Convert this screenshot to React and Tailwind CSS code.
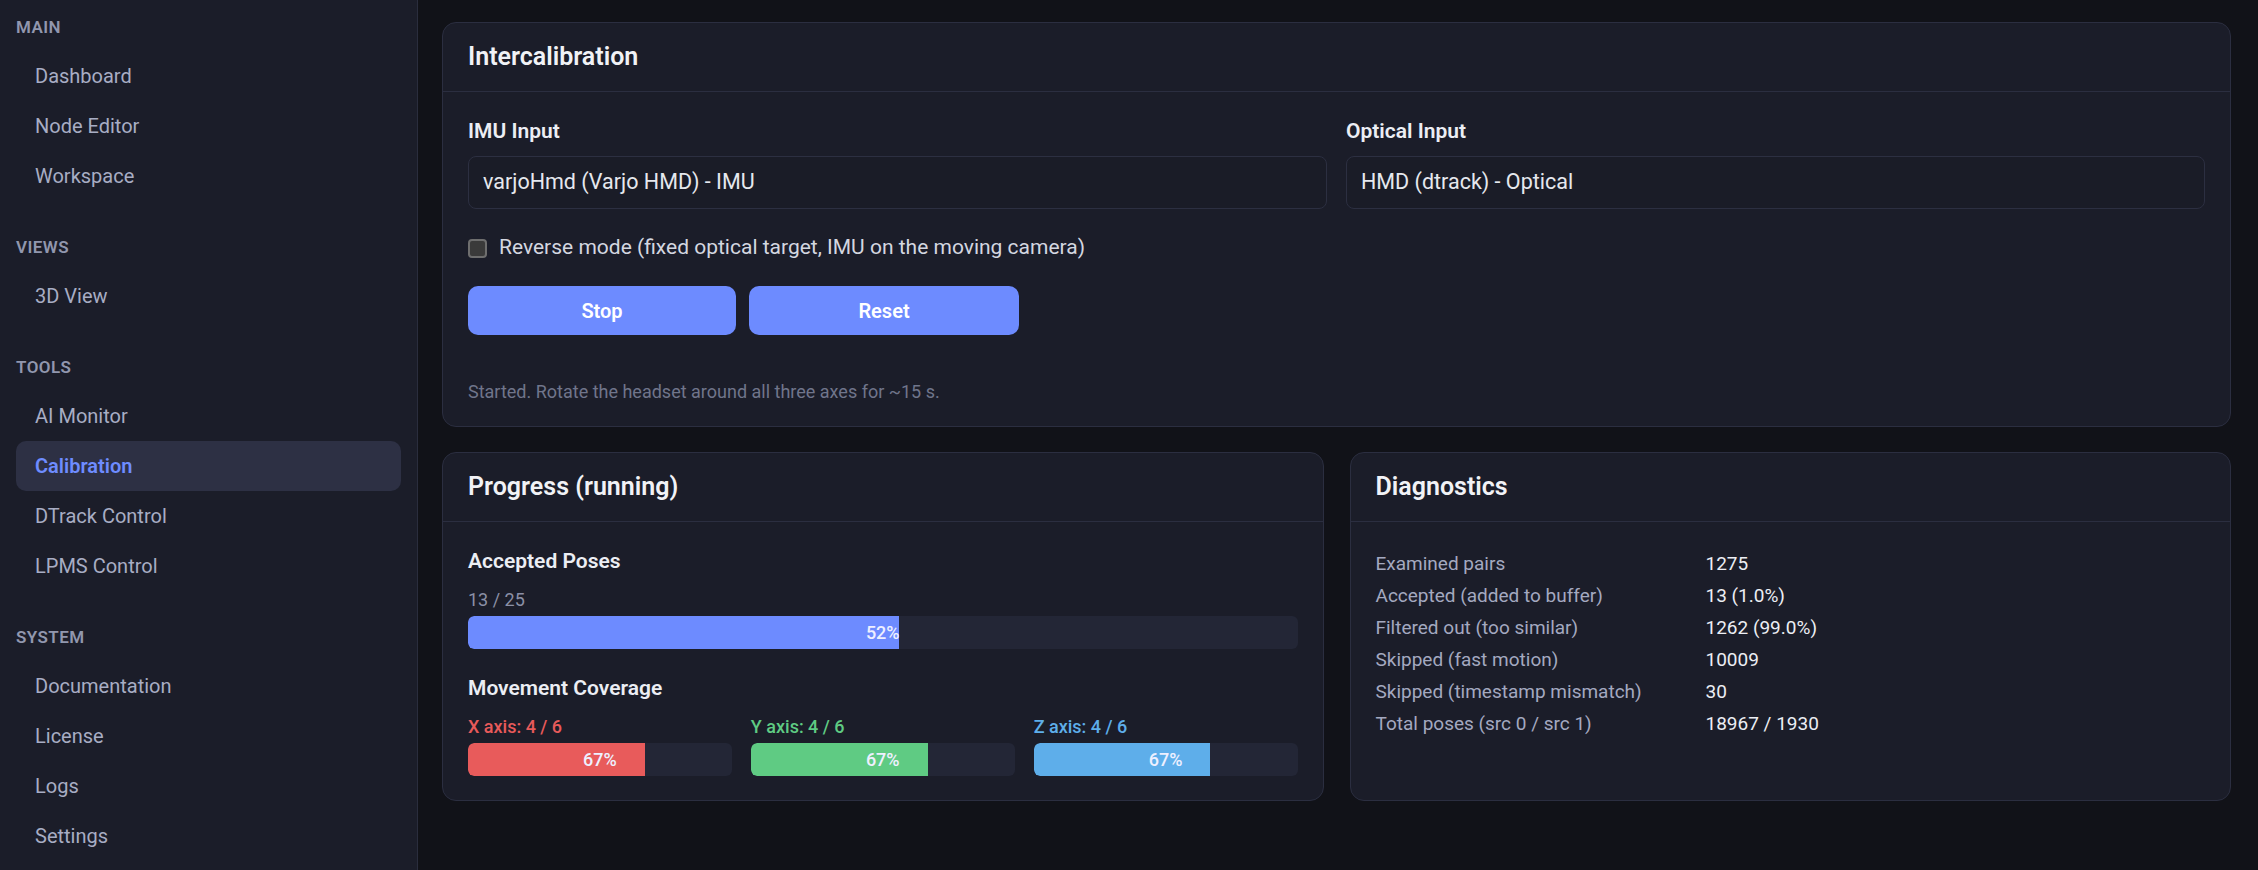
import { useState } from "react";

const sections = [
  { title: "MAIN", items: ["Dashboard", "Node Editor", "Workspace"] },
  { title: "VIEWS", items: ["3D View"] },
  { title: "TOOLS", items: ["AI Monitor", "Calibration", "DTrack Control", "LPMS Control"] },
  { title: "SYSTEM", items: ["Documentation", "License", "Logs", "Settings"] },
];

const diagnostics = [
  ["Examined pairs", "1275"],
  ["Accepted (added to buffer)", "13 (1.0%)"],
  ["Filtered out (too similar)", "1262 (99.0%)"],
  ["Skipped (fast motion)", "10009"],
  ["Skipped (timestamp mismatch)", "30"],
  ["Total poses (src 0 / src 1)", "18967 / 1930"],
];

const axes = [
  { label: "X axis: 4 / 6", text: "text-[#e85a5a]", fill: "bg-[#e85b5b]", pct: 67 },
  { label: "Y axis: 4 / 6", text: "text-[#5fcb83]", fill: "bg-[#5fcb83]", pct: 67 },
  { label: "Z axis: 4 / 6", text: "text-[#5eaeea]", fill: "bg-[#5eaeea]", pct: 67 },
];

function Bar({ pct, fill }) {
  return (
    <div className="relative h-[33px] w-full rounded-[6px] bg-[#232636] overflow-hidden">
      <div className={`h-full rounded-l-[6px] ${fill}`} style={{ width: pct + "%" }} />
      <div className="absolute inset-0 flex items-center justify-center text-[18px] font-medium text-[#eef0ff]">
        {pct}%
      </div>
    </div>
  );
}

function Card({ title, children, className = "" }) {
  return (
    <div className={`bg-[#1b1d29] border border-[#2b2e40] rounded-[14px] flex flex-col ${className}`}>
      <div className="h-[69px] px-[25px] flex items-center border-b border-[#2b2e40]">
        <h2 className="text-[25px] font-semibold text-[#f1f2f6]">{title}</h2>
      </div>
      {children}
    </div>
  );
}

export default function App() {
  const [reverse, setReverse] = useState(false);

  return (
    <div
      className="flex w-full h-[870px] bg-[#111218] overflow-hidden"
      style={{ fontFamily: "Roboto, 'Noto Sans', sans-serif" }}
    >
      {/* Sidebar */}
      <aside className="w-[418px] shrink-0 bg-[#1b1d29] border-r border-[#2a2d3d] pt-[16px] px-[16px]">
        {sections.map((s, i) => (
          <div key={s.title} className={i === 0 ? "" : "mt-[35px]"}>
            <div className="h-[24px] flex items-center mb-[11px] text-[17px] font-semibold tracking-wide text-[#9197ae]">
              {s.title}
            </div>
            {s.items.map((item) => {
              const active = item === "Calibration";
              return (
                <div
                  key={item}
                  className={
                    active
                      ? "h-[50px] flex items-center px-[19px] rounded-[10px] bg-[#2d3044] text-[20px] font-semibold text-[#6e8cff]"
                      : "h-[50px] flex items-center px-[19px] text-[20px] text-[#a8adc4]"
                  }
                >
                  {item}
                </div>
              );
            })}
          </div>
        ))}
      </aside>

      {/* Main */}
      <main className="flex-1 pt-[22px] pl-[24px] pr-[27px]">
        <Card title="Intercalibration">
          <div className="px-[25px] pt-[25px] pb-[22px]">
            <div className="grid grid-cols-2 gap-[19px]">
              <div>
                <div className="h-[30px] flex items-center text-[21px] font-semibold text-[#eceef4]">IMU Input</div>
                <div className="mt-[9px] h-[53px] flex items-center px-[14px] rounded-[8px] border border-[#2c2f41] bg-[#1a1c27] text-[21.5px] text-[#e6e8ee]">
                  varjoHmd (Varjo HMD) - IMU
                </div>
              </div>
              <div>
                <div className="h-[30px] flex items-center text-[21px] font-semibold text-[#eceef4]">Optical Input</div>
                <div className="mt-[9px] h-[53px] flex items-center px-[14px] rounded-[8px] border border-[#2c2f41] bg-[#1a1c27] text-[21.5px] text-[#e6e8ee]">
                  HMD (dtrack) - Optical
                </div>
              </div>
            </div>

            <label className="mt-[27px] h-[24px] flex items-center gap-[12px] text-[21px] text-[#d4d7e0] cursor-pointer">
              <span
                onClick={() => setReverse(!reverse)}
                className="w-[19px] h-[19px] rounded-[4px] border-2 border-[#6e6e6e] bg-[#3a3a3a]"
              />
              Reverse mode (fixed optical target, IMU on the moving camera)
            </label>

            <div className="mt-[26px] flex gap-[13px]">
              <button className="w-[268px] h-[49px] rounded-[10px] bg-[#6d8bff] text-[20px] font-semibold text-white">
                Stop
              </button>
              <button className="w-[270px] h-[49px] rounded-[10px] bg-[#6d8bff] text-[20px] font-semibold text-white">
                Reset
              </button>
            </div>

            <div className="mt-[43px] h-[26px] flex items-center text-[18px] text-[#70758b]">
              Started. Rotate the headset around all three axes for ~15 s.
            </div>
          </div>
        </Card>

        <div className="mt-[25px] grid grid-cols-2 gap-[26px]">
          <Card title="Progress (running)">
            <div className="px-[25px] pt-[25px] pb-[24px]">
              <div className="h-[30px] flex items-center text-[21px] font-semibold text-[#eceef4]">Accepted Poses</div>
              <div className="mt-[9px] h-[26px] flex items-center text-[18px] text-[#8b90a6]">13 / 25</div>
              <div className="mt-[4px]">
                <Bar pct={52} fill="bg-[#6d8bff]" />
              </div>

              <div className="mt-[25px] h-[30px] flex items-center text-[21px] font-semibold text-[#eceef4]">
                Movement Coverage
              </div>
              <div className="mt-[9px] grid grid-cols-3 gap-[19px]">
                {axes.map((a) => (
                  <div key={a.label}>
                    <div className={`h-[26px] flex items-center text-[18px] font-medium ${a.text}`}>{a.label}</div>
                    <div className="mt-[4px]">
                      <Bar pct={a.pct} fill={a.fill} />
                    </div>
                  </div>
                ))}
              </div>
            </div>
          </Card>

          <Card title="Diagnostics">
            <div className="px-[25px] pt-[26px] pb-[24px] grid grid-cols-[330px_1fr]">
              {diagnostics.map(([k, v]) => (
                <div key={k} className="contents">
                  <div className="h-[32px] flex items-center text-[19px] text-[#a4a9c0]">{k}</div>
                  <div className="h-[32px] flex items-center text-[19px] text-[#eceef4]">{v}</div>
                </div>
              ))}
            </div>
          </Card>
        </div>
      </main>
    </div>
  );
}
